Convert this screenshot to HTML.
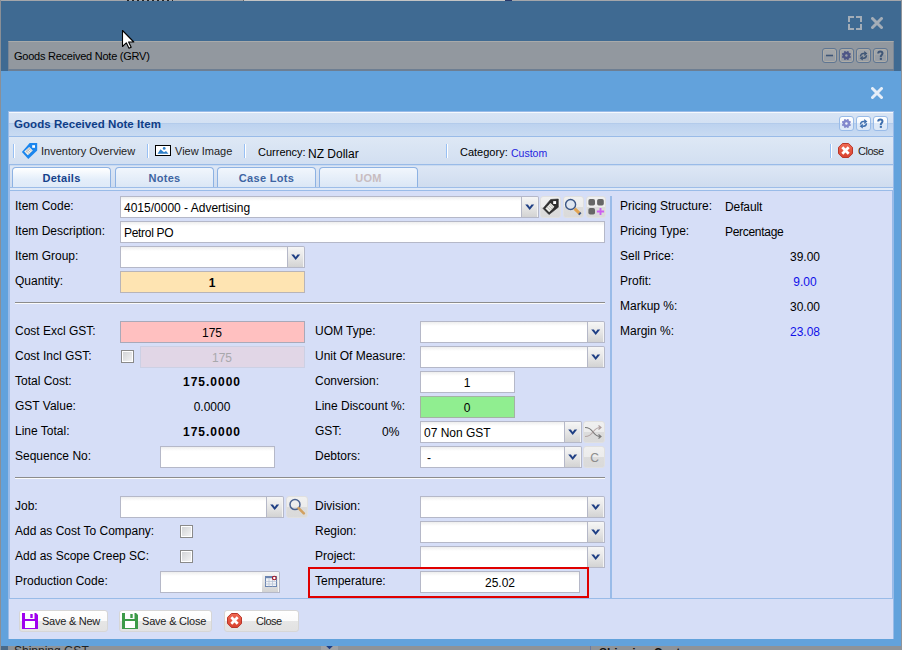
<!DOCTYPE html>
<html><head><meta charset="utf-8"><style>
*{box-sizing:border-box;margin:0;padding:0}
html,body{width:902px;height:650px;overflow:hidden;background:#3f6a92;font-family:"Liberation Sans",sans-serif;font-size:12px;color:#000}
.a{position:absolute}
.t{position:absolute;white-space:nowrap;line-height:14px}
.tab{position:absolute;top:167px;width:99px;height:20px;border:1px solid #8db2e3;border-bottom:none;border-radius:4px 4px 0 0;background:linear-gradient(#f1f6fc,#dbe7f6);text-align:center;font:bold 11px "Liberation Sans",sans-serif;color:#15428b;line-height:20px;letter-spacing:0.3px}
.tab.act{background:linear-gradient(#ffffff,#e4eefa 60%,#dfeaf8)}
.sep{position:absolute;width:2px;height:14px;border-left:1px solid #98c0f4;border-right:1px solid #fff}
.inp{position:absolute;height:22px;background:linear-gradient(#eeeeee 0,#ffffff 4px);border:1px solid #b5b8c8}
.trig{position:absolute;width:17px;height:22px;background:linear-gradient(#f6f6f6,#e8e8e8 45%,#d3d3d3);border:1px solid #b5b8c8;border-left:none;border-top-right-radius:2px;box-shadow:inset -1px 0 0 #f4f4f4}
.hr{position:absolute;left:15px;width:590px;height:2px;border-top:1px solid #8c8c8c;border-bottom:1px solid #fbfbfb}
.cb{position:absolute;width:13px;height:13px;border:1px solid #8a8a8a;background:linear-gradient(135deg,#cfd1d4,#f6f6f6);box-shadow:inset 0 0 0 1px #fff}
.btn{position:absolute;height:22px;border:1px solid #d6d6d6;border-radius:3px;background:linear-gradient(#ffffff 0,#fbfbfb 50%,#e6e6e6 50%,#e2e2e2 100%)}
.sbtn{position:absolute;width:21px;height:22px;border-radius:3px;background:linear-gradient(#f0f0f0 0,#ececec 50%,#dcdcdc 50%,#dadada 100%);border:1px solid #e0e0e0}
.tool{position:absolute;width:15px;height:15px;border:1px solid #99bbe8;border-radius:3px;background:linear-gradient(#ffffff 0,#f6f9fd 50%,#dde8f7 50%,#dde8f7)}
.tool2{position:absolute;width:15px;height:15px;border:1px solid #5f7693;border-radius:3px;background:linear-gradient(#a2a6aa 0,#a0a4a9 50%,#979da5 50%,#979da5);box-shadow:inset 0 0 0 1px #aeaca6}
.arr{position:absolute}
</style></head><body>
<div class="a" style="left:0;top:0;width:902px;height:1px;background:#a4a6aa"></div>
<div class="a" style="left:0;top:0;width:1px;height:650px;background:#8a8f96"></div>
<div class="a" style="left:127px;top:0;width:46px;height:1px;background:repeating-linear-gradient(90deg,#222 0,#222 2px,transparent 2px,transparent 5px)"></div>
<div class="a" style="left:243px;top:0;width:1px;height:1px;background:#666"></div>
<div class="a" style="left:244px;top:0;width:262px;height:1px;background:#c4c4c4"></div>
<div class="a" style="left:505px;top:0;width:7px;height:1px;background:#28386a"></div>
<div class="a" style="left:901px;top:0;width:1px;height:650px;background:#8f949a"></div>
<svg class="a" style="left:848px;top:16px" width="14" height="14" viewBox="0 0 14 14"><path d="M1 6V1H6M8 1H13V6M13 8V13H8M6 13H1V8" fill="none" stroke="#a4adb7" stroke-width="2"/></svg>
<svg class="a" style="left:871px;top:17px" width="12" height="12" viewBox="0 0 12 12"><path d="M1.5 1.5L10.5 10.5M10.5 1.5L1.5 10.5" stroke="#a4adb7" stroke-width="3" stroke-linecap="round"/></svg>
<div class="a" style="left:8px;top:41px;width:886px;height:28px;background:#92989f;border-left:1px solid #7a8797;border-right:1px solid #7a8797;border-top:1px solid #a8aaaa"></div>
<div class="a" style="left:8px;top:69px;width:886px;height:2px;background:#6d7e92"></div>
<div class="t" style="left:14px;top:49px;font-size:11px;letter-spacing:-0.24px;color:#000">Goods Received Note (GRV)</div>
<div class="tool2" style="left:822px;top:48px"></div>
<div class="tool2" style="left:839px;top:48px"></div>
<div class="tool2" style="left:856px;top:48px"></div>
<div class="tool2" style="left:873px;top:48px"></div>
<svg class="a" style="left:822px;top:48px" width="15" height="15" viewBox="0 0 15 15"><rect x="4" y="6.7" width="7" height="1.6" fill="#3f5676"/></svg>
<svg class="a" style="left:839px;top:48px" width="15" height="15" viewBox="0 0 15 15"><circle cx="7.4" cy="7.5" r="3.7" fill="#4e5686"/><circle cx="10.91" cy="8.95" r="0.95" fill="#4e5686"/><circle cx="8.85" cy="11.01" r="0.95" fill="#4e5686"/><circle cx="5.95" cy="11.01" r="0.95" fill="#4e5686"/><circle cx="3.89" cy="8.95" r="0.95" fill="#4e5686"/><circle cx="3.89" cy="6.05" r="0.95" fill="#4e5686"/><circle cx="5.95" cy="3.99" r="0.95" fill="#4e5686"/><circle cx="8.85" cy="3.99" r="0.95" fill="#4e5686"/><circle cx="10.91" cy="6.05" r="0.95" fill="#4e5686"/><circle cx="7.4" cy="7.5" r="1.2" fill="#9aa0a8"/></svg>
<svg class="a" style="left:856px;top:48px" width="15" height="15" viewBox="0 0 15 15"><path d="M4.6 8.4C4.6 6.4 5.6 5.5 7.4 5.5H8.5" fill="none" stroke="#3f5676" stroke-width="1.5"/><path d="M8.2 3.1L11.4 5.5L8.2 7.9Z" fill="#3f5676"/><path d="M10.4 7.3C10.4 9.3 9.4 10.2 7.6 10.2H6.5" fill="none" stroke="#3f5676" stroke-width="1.5"/><path d="M6.8 7.8L3.6 10.2L6.8 12.6Z" fill="#3f5676"/></svg>
<svg class="a" style="left:873px;top:48px" width="15" height="15" viewBox="0 0 15 15"><path d="M5.2 5.6C5.2 4.2 6 3.5 7.3 3.5S9.5 4.2 9.5 5.4C9.5 6.8 7.8 7.1 7.8 8.5V9.2" fill="none" stroke="#3f5676" stroke-width="2"/><rect x="6.8" y="10" width="2.1" height="1.9" fill="#3f5676"/></svg>
<div class="a" style="left:1px;top:71px;width:900px;height:575px;background:#62a2dc"></div>
<svg class="a" style="left:871px;top:87px" width="12" height="12" viewBox="0 0 12 12"><path d="M1.5 1.5L10.5 10.5M10.5 1.5L1.5 10.5" stroke="#e6eef8" stroke-width="3" stroke-linecap="round"/></svg>
<div class="a" style="left:0;top:646px;width:902px;height:4px;background:#8e9399"></div>
<div class="a" style="left:1px;top:646px;width:7px;height:4px;background:#4a6a88"></div>
<div class="a" style="left:321px;top:646px;width:17px;height:4px;background:#a0a2a6"></div>
<div class="a" style="left:590px;top:646px;width:1px;height:4px;background:#6a7aa0"></div>
<div class="a" style="left:8px;top:646px;width:894px;height:4px;overflow:hidden"><div class="t" style="left:6px;top:-2px;font-size:12px;color:#222">Shipping GST</div><svg class="a" style="left:316px;top:-4px" width="11" height="8" viewBox="0 0 11 8"><path d="M1 1.2L5.5 5.6L10 1.2" fill="none" stroke="#1f3f84" stroke-width="2.4"/></svg><div class="t" style="left:591px;top:0px;font-size:12px;font-weight:bold;color:#111">Shipping Cost</div></div>
<div class="a" style="left:8px;top:111px;width:886px;height:528px;border:1px solid #99bbe8;background:#d6def7"></div>
<div class="a" style="left:9px;top:112px;width:884px;height:25px;background:linear-gradient(#f6f9fd 0,#f6f9fd 1px,#d8e4f4 1px,#d3e1f3 11px,#b3cbeb 11px,#b3cbeb 12px,#bcd2ef 12px,#c9dbf2 24px,#99bbe8 24px)"></div>
<div class="t" style="left:14px;top:117px;font:bold 11.5px 'Liberation Sans',sans-serif;line-height:14px;letter-spacing:0.05px;color:#0f3d86">Goods Received Note Item</div>
<div class="tool" style="left:839px;top:116px"></div>
<div class="tool" style="left:856px;top:116px"></div>
<div class="tool" style="left:873px;top:116px"></div>
<svg class="a" style="left:839px;top:116px" width="15" height="15" viewBox="0 0 15 15"><circle cx="7.4" cy="7.5" r="3.7" fill="#8388cc"/><circle cx="10.91" cy="8.95" r="0.95" fill="#8388cc"/><circle cx="8.85" cy="11.01" r="0.95" fill="#8388cc"/><circle cx="5.95" cy="11.01" r="0.95" fill="#8388cc"/><circle cx="3.89" cy="8.95" r="0.95" fill="#8388cc"/><circle cx="3.89" cy="6.05" r="0.95" fill="#8388cc"/><circle cx="5.95" cy="3.99" r="0.95" fill="#8388cc"/><circle cx="8.85" cy="3.99" r="0.95" fill="#8388cc"/><circle cx="10.91" cy="6.05" r="0.95" fill="#8388cc"/><circle cx="7.4" cy="7.5" r="1.2" fill="#eef2fb"/></svg>
<svg class="a" style="left:856px;top:116px" width="15" height="15" viewBox="0 0 15 15"><path d="M4.6 8.4C4.6 6.4 5.6 5.5 7.4 5.5H8.5" fill="none" stroke="#3f6fae" stroke-width="1.5"/><path d="M8.2 3.1L11.4 5.5L8.2 7.9Z" fill="#3f6fae"/><path d="M10.4 7.3C10.4 9.3 9.4 10.2 7.6 10.2H6.5" fill="none" stroke="#3f6fae" stroke-width="1.5"/><path d="M6.8 7.8L3.6 10.2L6.8 12.6Z" fill="#3f6fae"/></svg>
<svg class="a" style="left:873px;top:116px" width="15" height="15" viewBox="0 0 15 15"><path d="M5.2 5.6C5.2 4.2 6 3.5 7.3 3.5S9.5 4.2 9.5 5.4C9.5 6.8 7.8 7.1 7.8 8.5V9.2" fill="none" stroke="#3f6fae" stroke-width="2"/><rect x="6.8" y="10" width="2.1" height="1.9" fill="#3f6fae"/></svg>
<div class="a" style="left:9px;top:137px;width:884px;height:28px;background:linear-gradient(#dee8f5,#d2dff1);border-bottom:1px solid #99bbe8"></div>
<div class="sep" style="left:13px;top:144px"></div>
<svg class="a" style="left:21px;top:142px" width="18" height="18" viewBox="0 0 18 18"><path d="M8.7 1H16.2V8.5L7.3 16.9L0.9 9.9Z" fill="#1b86ee"/><rect x="11.2" y="3.2" width="2.8" height="2.6" fill="#fff"/><path d="M3.2 9.6L8.2 5L11.8 8.6L6.8 13.2Z" fill="#f4f1ea"/><path d="M5 8.6L8.3 11.8M6.3 7.4L9.6 10.6M7.6 6.2L10.8 9.4M4.6 10.6L9.2 6.3" stroke="#9a9ea6" stroke-width="0.6"/></svg>
<div class="t" style="left:41px;top:144px;font-size:11px;color:#222">Inventory Overview</div>
<div class="sep" style="left:147px;top:144px"></div>
<svg class="a" style="left:155px;top:145px" width="16" height="11" viewBox="0 0 16 11"><rect x="0.5" y="0.5" width="15" height="10" fill="#fff" stroke="#000"/><path d="M2.5 8.8L5.5 4.2L7.5 6L9 7.2L11 6L13.5 8.8Z" fill="#2f7fc8"/><circle cx="9.2" cy="3.4" r="1.4" fill="#2f7fc8"/></svg>
<div class="t" style="left:175px;top:144px;font-size:11px;color:#222">View Image</div>
<div class="sep" style="left:244px;top:144px"></div>
<div class="t" style="left:258px;top:145px;font-size:11px;color:#000">Currency:</div>
<div class="t" style="left:308px;top:147px;font-size:12px;color:#000">NZ Dollar</div>
<div class="sep" style="left:446px;top:144px"></div>
<div class="t" style="left:460px;top:145px;font-size:11px;color:#000">Category:</div>
<div class="t" style="left:511px;top:146px;font-size:10.5px;color:#2424e0">Custom</div>
<div class="sep" style="left:830px;top:144px"></div>
<svg class="a" style="left:838px;top:143px" width="15" height="15" viewBox="0 0 15 15"><defs><linearGradient id="og" x1="0" y1="0" x2="0" y2="1"><stop offset="0" stop-color="#f06a52"/><stop offset="1" stop-color="#d8402e"/></linearGradient></defs><path d="M4.4 0.5H10.6L14.5 4.4V10.6L10.6 14.5H4.4L0.5 10.6V4.4Z" fill="url(#og)" stroke="#b8362a" stroke-width="1"/><path d="M4.3 4.3L10.7 10.7M10.7 4.3L4.3 10.7" stroke="#fff" stroke-width="2.7"/></svg>
<div class="t" style="left:858px;top:144px;font-size:11px;letter-spacing:-0.5px;color:#222">Close</div>
<div class="a" style="left:9px;top:165px;width:884px;height:26px;background:linear-gradient(#c9daf0 0,#c9daf0 1px,#dde7f5 1px,#cfdcef 22px,#9dbde8 22px,#9dbde8 23px,#e0eaf8 23px,#e0eaf8 25px,#99bbe8 25px);border-left:1px solid #99bbe8"></div>
<div class="tab act" style="left:12px">Details</div>
<div class="tab" style="left:115px;color:#3d64a2">Notes</div>
<div class="tab" style="left:217px;color:#3d64a2">Case Lots</div>
<div class="tab" style="left:319px;color:#c8bcc0">UOM</div>
<div class="a" style="left:9px;top:191px;width:884px;height:408px;background:#d6def7;border-left:1px solid #99bbe8;border-right:1px solid #99bbe8;border-bottom:1px solid #99bbe8"></div>
<div class="a" style="left:610px;top:196px;width:2px;height:402px;background:#99bbe8"></div>
<div class="t" style="left:15px;top:199px;">Item Code:</div>
<div class="inp" style="left:120px;top:196px;width:402px"></div>
<div class="trig" style="left:522px;top:196px"></div>
<svg class="a" style="left:525.3px;top:203.9px" width="10" height="7" viewBox="0 0 10 7"><path d="M0.2 0.4H2.9L4.7 2.9L6.5 0.4H9.2L4.7 6.1Z" fill="#1f3f84"/></svg>
<div class="t" style="left:124px;top:201px;">4015/0000 - Advertising</div>
<div class="sbtn" style="left:540px;top:196px;width:21px"></div>
<svg class="a" style="left:542px;top:198px" width="18" height="18" viewBox="0 0 18 18"><path d="M1 10.4L8.6 1.5L16.3 1V9.2L7 16.6Z" fill="#2e2e2e" stroke="#2e2e2e" stroke-width="0.6" stroke-linejoin="round"/><path d="M3.4 10.4L8.5 4.9L12.4 8.8L7.2 14.2Z" fill="#eeeee8"/><path d="M5 8.8L8.8 12.6M6.3 7.4L10.1 11.2M7.6 6L11.3 9.7" stroke="#a8a8a8" stroke-width="0.7"/><rect x="11.2" y="3.1" width="2.9" height="2.9" fill="#fff"/></svg>
<div class="sbtn" style="left:563px;top:196px;width:21px"></div>
<svg class="a" style="left:564px;top:197px" width="20" height="20" viewBox="0 0 20 20"><circle cx="6.6" cy="7.5" r="5" fill="#dfe6f0" stroke="#3a5585" stroke-width="1.4"/><path d="M10.6 11.6L15.8 16.6" stroke="#e2a452" stroke-width="3" stroke-linecap="butt"/><path d="M15.2 16L16.4 17.2" stroke="#3a5585" stroke-width="3"/></svg>
<div class="sbtn" style="left:586px;top:196px;width:20px"></div>
<svg class="a" style="left:586px;top:197px" width="20" height="20" viewBox="0 0 20 20"><rect x="2.4" y="2" width="6.6" height="6.6" rx="1.8" fill="#666"/><rect x="11.1" y="2" width="6.7" height="6.6" rx="1.8" fill="#666"/><rect x="2.4" y="11" width="6.6" height="6.6" rx="1.8" fill="#666"/><path d="M14.5 10.9V18.1M10.9 14.5H18.1" stroke="#cc60f0" stroke-width="1.9"/></svg>
<div class="t" style="left:15px;top:224px;">Item Description:</div>
<div class="inp" style="left:120px;top:221px;width:485px"></div>
<div class="t" style="left:124px;top:226px;letter-spacing:-0.3px">Petrol PO</div>
<div class="t" style="left:15px;top:249px;">Item Group:</div>
<div class="inp" style="left:120px;top:246px;width:168px"></div>
<div class="trig" style="left:288px;top:246px"></div>
<svg class="a" style="left:291.3px;top:253.9px" width="10" height="7" viewBox="0 0 10 7"><path d="M0.2 0.4H2.9L4.7 2.9L6.5 0.4H9.2L4.7 6.1Z" fill="#1f3f84"/></svg>
<div class="t" style="left:15px;top:274px;">Quantity:</div>
<div class="inp" style="left:120px;top:271px;width:185px;background:#fee4b2;border-color:#b8b4b8"></div>
<div class="t" style="left:112px;width:200px;text-align:center;top:276px;font-weight:bold">1</div>
<div class="hr" style="top:302px"></div>
<div class="t" style="left:15px;top:324px;">Cost Excl GST:</div>
<div class="inp" style="left:120px;top:321px;width:185px;background:#ffc0c0;border-color:#a9a9b9"></div>
<div class="t" style="left:112px;width:200px;text-align:center;top:326px;">175</div>
<div class="t" style="left:315px;top:324px;">UOM Type:</div>
<div class="inp" style="left:420px;top:321px;width:168px"></div>
<div class="trig" style="left:588px;top:321px"></div>
<svg class="a" style="left:591.3px;top:328.9px" width="10" height="7" viewBox="0 0 10 7"><path d="M0.2 0.4H2.9L4.7 2.9L6.5 0.4H9.2L4.7 6.1Z" fill="#1f3f84"/></svg>
<div class="t" style="left:15px;top:349px;">Cost Incl GST:</div>
<div class="cb" style="left:121px;top:350px"></div>
<div class="inp" style="left:140px;top:346px;width:165px;background:#e1d6e6;border-color:#ccd0e4"></div>
<div class="t" style="left:122px;width:200px;text-align:center;top:351px;color:#a8a8ac">175</div>
<div class="t" style="left:315px;top:349px;">Unit Of Measure:</div>
<div class="inp" style="left:420px;top:346px;width:168px"></div>
<div class="trig" style="left:588px;top:346px"></div>
<svg class="a" style="left:591.3px;top:353.9px" width="10" height="7" viewBox="0 0 10 7"><path d="M0.2 0.4H2.9L4.7 2.9L6.5 0.4H9.2L4.7 6.1Z" fill="#1f3f84"/></svg>
<div class="t" style="left:15px;top:374px;">Total Cost:</div>
<div class="t" style="left:112px;width:200px;text-align:center;top:375px;font-weight:bold;letter-spacing:1px">175.0000</div>
<div class="t" style="left:315px;top:374px;">Conversion:</div>
<div class="inp" style="left:420px;top:371px;width:95px"></div>
<div class="t" style="left:367px;width:200px;text-align:center;top:376px;">1</div>
<div class="t" style="left:15px;top:399px;">GST Value:</div>
<div class="t" style="left:112px;width:200px;text-align:center;top:400px;">0.0000</div>
<div class="t" style="left:315px;top:399px;">Line Discount %:</div>
<div class="inp" style="left:420px;top:396px;width:95px;background:#90ee90;border-color:#a3b3a3"></div>
<div class="t" style="left:367px;width:200px;text-align:center;top:401px;">0</div>
<div class="t" style="left:15px;top:424px;">Line Total:</div>
<div class="t" style="left:112px;width:200px;text-align:center;top:425px;font-weight:bold;letter-spacing:1px">175.0000</div>
<div class="t" style="left:315px;top:424px;">GST:</div>
<div class="t" style="left:382px;top:425px;">0%</div>
<div class="inp" style="left:420px;top:421px;width:145px"></div>
<div class="trig" style="left:565px;top:421px"></div>
<svg class="a" style="left:568.3px;top:428.9px" width="10" height="7" viewBox="0 0 10 7"><path d="M0.2 0.4H2.9L4.7 2.9L6.5 0.4H9.2L4.7 6.1Z" fill="#1f3f84"/></svg>
<div class="t" style="left:424px;top:426px;">07 Non GST</div>
<div class="sbtn" style="left:583px;top:421px;width:22px"></div>
<svg class="a" style="left:583px;top:421px" width="21" height="22" viewBox="0 0 21 22"><path d="M2 6.5C6 6.5 8 8 10 11S14 15.5 17.5 15.5" fill="none" stroke="#777" stroke-width="1.1"/><path d="M2 15.5C6 15.5 8 14 10 11" fill="none" stroke="#a99" stroke-width="1.1" opacity="0.8"/><path d="M10 11C12 8 14 6.5 17.5 6.5" fill="none" stroke="#a99" stroke-width="1.1" opacity="0.8"/><path d="M15.5 13.5L18 15.5L15.5 17.5" fill="none" stroke="#777" stroke-width="1.1"/><path d="M15.5 4.5L18 6.5L15.5 8.5" fill="none" stroke="#a99" stroke-width="1.1"/></svg>
<div class="t" style="left:15px;top:449px;">Sequence No:</div>
<div class="inp" style="left:160px;top:446px;width:115px"></div>
<div class="t" style="left:315px;top:449px;">Debtors:</div>
<div class="inp" style="left:420px;top:446px;width:145px"></div>
<div class="trig" style="left:565px;top:446px"></div>
<svg class="a" style="left:568.3px;top:453.9px" width="10" height="7" viewBox="0 0 10 7"><path d="M0.2 0.4H2.9L4.7 2.9L6.5 0.4H9.2L4.7 6.1Z" fill="#1f3f84"/></svg>
<div class="t" style="left:427px;top:451px;">-</div>
<div class="sbtn" style="left:583px;top:446px;width:22px"></div>
<div class="t" style="left:584px;top:451px;width:21px;text-align:center;color:#8c8c8c;font-size:12px">C</div>
<div class="hr" style="top:477px"></div>
<div class="t" style="left:15px;top:499px;">Job:</div>
<div class="inp" style="left:120px;top:496px;width:147px"></div>
<div class="trig" style="left:267px;top:496px"></div>
<svg class="a" style="left:270.3px;top:503.9px" width="10" height="7" viewBox="0 0 10 7"><path d="M0.2 0.4H2.9L4.7 2.9L6.5 0.4H9.2L4.7 6.1Z" fill="#1f3f84"/></svg>
<div class="sbtn" style="left:286px;top:496px;width:22px"></div>
<svg class="a" style="left:287px;top:497px" width="20" height="20" viewBox="0 0 20 20"><circle cx="8" cy="7.6" r="5" fill="none" stroke="#4b6290" stroke-width="1.5"/><path d="M11.6 11.2L16.8 16.4" stroke="#d2a060" stroke-width="2.6" stroke-linecap="round"/></svg>
<div class="t" style="left:315px;top:499px;">Division:</div>
<div class="inp" style="left:420px;top:496px;width:168px"></div>
<div class="trig" style="left:588px;top:496px"></div>
<svg class="a" style="left:591.3px;top:503.9px" width="10" height="7" viewBox="0 0 10 7"><path d="M0.2 0.4H2.9L4.7 2.9L6.5 0.4H9.2L4.7 6.1Z" fill="#1f3f84"/></svg>
<div class="t" style="left:15px;top:524px;">Add as Cost To Company:</div>
<div class="cb" style="left:180px;top:525px"></div>
<div class="t" style="left:315px;top:524px;">Region:</div>
<div class="inp" style="left:420px;top:521px;width:168px"></div>
<div class="trig" style="left:588px;top:521px"></div>
<svg class="a" style="left:591.3px;top:528.9px" width="10" height="7" viewBox="0 0 10 7"><path d="M0.2 0.4H2.9L4.7 2.9L6.5 0.4H9.2L4.7 6.1Z" fill="#1f3f84"/></svg>
<div class="t" style="left:15px;top:549px;">Add as Scope Creep SC:</div>
<div class="cb" style="left:180px;top:550px"></div>
<div class="t" style="left:315px;top:549px;">Project:</div>
<div class="inp" style="left:420px;top:546px;width:168px"></div>
<div class="trig" style="left:588px;top:546px"></div>
<svg class="a" style="left:591.3px;top:553.9px" width="10" height="7" viewBox="0 0 10 7"><path d="M0.2 0.4H2.9L4.7 2.9L6.5 0.4H9.2L4.7 6.1Z" fill="#1f3f84"/></svg>
<div class="t" style="left:15px;top:574px;">Production Code:</div>
<div class="inp" style="left:160px;top:571px;width:103px"></div>
<div class="trig" style="left:262px;top:571px;width:18px"></div>
<svg class="a" style="left:265px;top:575px" width="13" height="13" viewBox="0 0 13 13"><rect x="0.5" y="1.5" width="11" height="10" fill="#f2f4f8" stroke="#6a84b0"/><rect x="0.5" y="1" width="11" height="2.2" fill="#6a84b0"/><path d="M0.5 6.5H11.5M4 3.5V11.5M7.5 3.5V11.5M0.5 9H11.5" stroke="#b4c0d4" stroke-width="0.7"/><circle cx="9.3" cy="3" r="1.8" fill="#fff" stroke="#a01020" stroke-width="1.1"/></svg>
<div class="a" style="left:308px;top:567px;width:281px;height:31px;border:2px solid #e00000"></div>
<div class="t" style="left:315px;top:574px;">Temperature:</div>
<div class="inp" style="left:420px;top:571px;width:160px"></div>
<div class="t" style="left:400px;width:200px;text-align:center;top:576px;">25.02</div>
<div class="t" style="left:620px;top:199px;">Pricing Structure:</div>
<div class="t" style="left:725px;top:200px;letter-spacing:-0.1px">Default</div>
<div class="t" style="left:620px;top:224px;">Pricing Type:</div>
<div class="t" style="left:725px;top:225px;letter-spacing:-0.3px">Percentage</div>
<div class="t" style="left:620px;top:249px;">Sell Price:</div>
<div class="t" style="left:705px;width:200px;text-align:center;top:250px;">39.00</div>
<div class="t" style="left:620px;top:274px;">Profit:</div>
<div class="t" style="left:705px;width:200px;text-align:center;top:275px;color:#1010e8">9.00</div>
<div class="t" style="left:620px;top:299px;">Markup %:</div>
<div class="t" style="left:705px;width:200px;text-align:center;top:300px;">30.00</div>
<div class="t" style="left:620px;top:324px;">Margin %:</div>
<div class="t" style="left:705px;width:200px;text-align:center;top:325px;color:#1010e8">23.08</div>
<div class="a" style="left:9px;top:599px;width:884px;height:40px;background:#d6def7"></div>
<div class="btn" style="left:19px;top:610px;width:89px"></div>
<svg class="a" style="left:22px;top:613px" width="16" height="16" viewBox="0 0 16 16"><path d="M0 0H3V6H12.5V0H14L16 2V16H0Z" fill="#a000ee"/><rect x="3" y="8" width="10" height="7" fill="#fff"/><rect x="8.3" y="1" width="2.4" height="4" fill="#a000ee"/></svg>
<div class="t" style="left:42px;top:614px;font-size:11px;letter-spacing:-0.25px;color:#222">Save &amp; New</div>
<div class="btn" style="left:119px;top:610px;width:93px"></div>
<svg class="a" style="left:122px;top:613px" width="16" height="16" viewBox="0 0 16 16"><path d="M0 0H3V6H12.5V0H14L16 2V16H0Z" fill="#3c9a48"/><rect x="3" y="8" width="10" height="7" fill="#fff"/><rect x="8.3" y="1" width="2.4" height="4" fill="#3c9a48"/></svg>
<div class="t" style="left:142px;top:614px;font-size:11px;letter-spacing:-0.2px;color:#222">Save &amp; Close</div>
<div class="btn" style="left:224px;top:610px;width:75px"></div>
<svg class="a" style="left:227px;top:613px" width="15" height="15" viewBox="0 0 15 15"><defs><linearGradient id="og" x1="0" y1="0" x2="0" y2="1"><stop offset="0" stop-color="#f06a52"/><stop offset="1" stop-color="#d8402e"/></linearGradient></defs><path d="M4.4 0.5H10.6L14.5 4.4V10.6L10.6 14.5H4.4L0.5 10.6V4.4Z" fill="url(#og)" stroke="#b8362a" stroke-width="1"/><path d="M4.3 4.3L10.7 10.7M10.7 4.3L4.3 10.7" stroke="#fff" stroke-width="2.7"/></svg>
<div class="t" style="left:256px;top:614px;font-size:11px;letter-spacing:-0.5px;color:#222">Close</div>
<svg class="a" style="left:121px;top:29px" width="14" height="21" viewBox="0 0 14 21"><path d="M1.5 1.5V17.5L5.3 13.8L8 19.3L10.2 18.3L7.6 13H12.8Z" fill="#fff" stroke="#000" stroke-width="1.1" stroke-linejoin="round"/></svg>
</body></html>
